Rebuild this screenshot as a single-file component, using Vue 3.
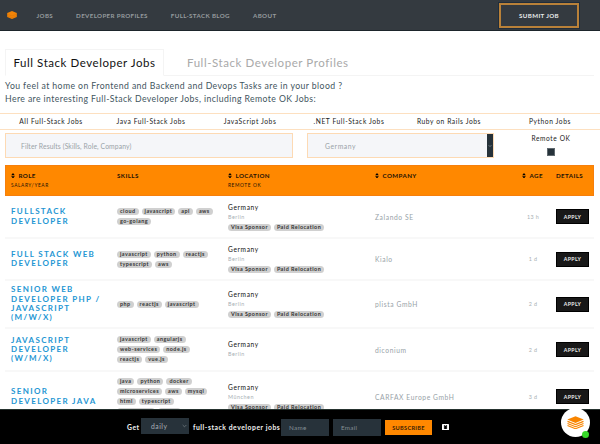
<script setup>
const nav = ['Jobs', 'Developer Profiles', 'Full-Stack Blog', 'About']
const categories = ['All Full-Stack Jobs', 'Java Full-Stack Jobs', 'JavaScript Jobs', '.NET Full-Stack Jobs', 'Ruby on Rails Jobs', 'Python Jobs']
const perks = ['Visa Sponsor', 'Paid Relocation']
const jobs = [
  { id: 1, size: 'first', role: ['Fullstack', 'Developer'], skills: [['cloud', 'javascript', 'api', 'aws'], ['go-golang']], city: 'Berlin', perks, company: 'Zalando SE', age: '13 h' },
  { id: 2, size: 'two', role: ['Full Stack Web', 'Developer'], skills: [['javascript', 'python', 'reactjs'], ['typescript', 'aws']], city: 'Berlin', perks, company: 'Kialo', age: '1 d' },
  { id: 3, size: 'four', role: ['Senior Web', 'Developer PHP /', 'JavaScript', '(m/w/x)'], skills: [['php', 'reactjs', 'javascript']], city: 'Berlin', perks, company: 'plista GmbH', age: '2 d' },
  { id: 4, size: 'three', role: ['JavaScript', 'Developer', '(w/m/x)'], skills: [['javascript', 'angularjs'], ['web-services', 'node.js'], ['reactjs', 'vue.js']], city: 'Berlin', perks: [], company: 'diconium', age: '2 d' },
  { id: 5, size: 'tall', role: ['Senior', 'Developer Java'], skills: [['java', 'python', 'docker'], ['microservices', 'aws', 'mysql'], ['html', 'typescript'], ['kubernetes', 'spring']], city: 'München', perks, company: 'CARFAX Europe GmbH', age: '3 d' },
]
</script>

<template>
  <div class="page">
    <header class="topbar">
      <svg class="brand" viewBox="0 0 10 8">
        <path d="M5 0 9.8 2v4L5 8 .2 6V2z" fill="#f28407" />
        <path d="M.4 3.2 5 5l4.600-1.800M.4 5 5 6.800 9.600 5" fill="none" stroke="#d56c04" stroke-width=".4" />
      </svg>
      <nav class="nav">
        <a v-for="n in nav" :key="n">{{ n }}</a>
      </nav>
      <a class="submit">Submit Job</a>
    </header>

    <div class="tabs">
      <div class="tab active"><span>Full Stack Developer Jobs</span></div>
      <div class="tab"><span>Full-Stack Developer Profiles</span></div>
    </div>

    <div class="intro">
      <p class="line-a">You feel at home on Frontend and Backend and Devops Tasks are in your blood ?</p>
      <p class="line-b">Here are interesting Full-Stack Developer Jobs, including Remote OK Jobs:</p>
    </div>

    <div class="categories">
      <a v-for="c in categories" :key="c">{{ c }}</a>
    </div>

    <div class="filters">
      <div class="search">Filter Results (Skills, Role, Company)</div>
      <div class="country">
        <span>Germany</span>
        <i><svg viewBox="0 0 6 6"><path d="M1.5 2 3 3.7 4.5 2" /></svg></i>
      </div>
      <div class="remote"><span>Remote OK</span><b></b></div>
    </div>

    <div class="grid thead">
      <div><p><svg class="sort" viewBox="0 0 4 6"><path d="M2 0 4 2.5H0zM2 6 0 3.5h4z" /></svg>Role</p><small>Salary/Year</small></div>
      <div><p>Skills</p></div>
      <div><p><svg class="sort" viewBox="0 0 4 6"><path d="M2 0 4 2.5H0zM2 6 0 3.5h4z" /></svg>Location</p><small>Remote OK</small></div>
      <div><p><svg class="sort" viewBox="0 0 4 6"><path d="M2 0 4 2.5H0zM2 6 0 3.5h4z" /></svg>Company</p></div>
      <div><p><svg class="sort" viewBox="0 0 4 6"><path d="M2 0 4 2.5H0zM2 6 0 3.5h4z" /></svg>Age</p></div>
      <div><p>Details</p></div>
    </div>

    <div v-for="j in jobs" :key="j.id" class="grid row" :class="j.size">
      <h3><span v-for="r in j.role" :key="r">{{ r }}</span></h3>
      <div class="skills">
        <div v-for="(line, i) in j.skills" :key="i" class="pills">
          <span v-for="s in line" :key="s" class="pill">{{ s }}</span>
        </div>
      </div>
      <div class="location">
        <span class="land">Germany</span>
        <span class="city">{{ j.city }}</span>
        <div v-if="j.perks.length" class="pills perks">
          <span v-for="p in j.perks" :key="p" class="pill">{{ p }}</span>
        </div>
      </div>
      <div class="company">{{ j.company }}</div>
      <div class="age">{{ j.age }}</div>
      <div class="details"><a class="apply">Apply</a></div>
    </div>

    <footer class="subscribe">
      <span class="get">Get</span>
      <div class="daily"><span>daily</span><svg viewBox="0 0 6 4"><path d="M.8.8 3 3 5.2.8" /></svg></div>
      <span class="what">full-stack developer jobs</span>
      <div class="field name">Name</div>
      <div class="field">Email</div>
      <a class="send">Subscribe</a>
      <svg class="close" viewBox="0 0 7 6"><rect width="7" height="6" rx=".6" fill="#fff" /><path d="M2.1 1.6 4.9 4.4M4.9 1.6 2.1 4.4" stroke="#000" stroke-width="1.4" /></svg>
    </footer>

    <div class="chat">
      <svg viewBox="0 0 17 13">
        <path d="M8.5.3 16.7 3.6 8.5 7 .3 3.6z" fill="#f98500" />
        <path d="M.5 5.4 8.5 8.6l8-3.2M.5 7.5l8 3.2 8-3.2M.5 9.5l8 3.2 8-3.2" fill="none" stroke="#f98500" stroke-width="1.2" />
      </svg>
      <i></i>
    </div>
  </div>
</template>

<style>
body { background: #fff; overflow: hidden; }
</style>

<style scoped>
* { box-sizing: border-box; }
p, h3 { margin: 0; font-weight: inherit; }
.page { position: relative; width: 600px; height: 444px; overflow: hidden; font-family: Lato, "Open Sans", sans-serif; white-space: nowrap; color: #222; }
.topbar { height: 31px; background: #343a40; border-bottom: 1px solid #1d252b; display: flex; align-items: center; padding: 0 21px 0 7px; }
.brand { width: 10px; height: 8px; }
.nav { display: flex; gap: 23px; margin-left: 19.5px; flex: 1; font-size: 6.2px; font-weight: 700; letter-spacing: .36px; text-transform: uppercase; color: #969b9e; }
.submit { width: 80px; height: 25px; border: 2px solid #b98139; outline: 1px solid #202d3b; display: flex; align-items: center; justify-content: center; color: #e8eaeb; font-size: 6.2px; font-weight: 700; letter-spacing: .36px; text-transform: uppercase; }

.tabs { display: flex; margin: 18px 6px 0 5px; height: 27px; border-bottom: 1px solid #f4f4f4; }
.tab { height: 27px; padding: 0 0 1px 23px; display: flex; align-items: center; font-size: 11.5px; letter-spacing: .57px; color: #a9a9a9; }
.tab.active { width: 159px; padding-left: 7.5px; border: 1px solid #f4f4f4; border-bottom-color: #fff; color: #111; letter-spacing: .55px; }

.intro { padding: 4px 0 0 5px; font-size: 8.7px; line-height: 12.5px; color: #3f5560; }
.line-a { letter-spacing: .41px; }
.line-b { letter-spacing: .4px; }

.categories { display: grid; grid-template-columns: 102px 98px 100px 98px 102px 100px; height: 17px; margin-top: 7.5px; border-top: 1px solid #fde0c0; border-bottom: 1px solid #fde0c0; text-align: center; line-height: 14px; font-size: 6.7px; letter-spacing: .57px; }
.filters { display: flex; height: 25px; margin: 3.5px 0 0 5px; }
.search, .country { flex-shrink: 0; border: 1px solid #fddab4; background: #f5f6f9; font-size: 6.8px; color: #9aa3a8; display: flex; align-items: center; }
.search { width: 288px; padding-left: 15px; letter-spacing: .1px; }
.country { width: 187px; margin-left: 14px; padding-left: 17px; justify-content: space-between; letter-spacing: .55px; }
.country i { width: 6px; height: 23px; background: #26323a; display: flex; align-items: center; }
.country svg { width: 6px; height: 6px; fill: none; stroke: #8c979d; stroke-width: .6; }
.remote { width: 114px; flex-shrink: 0; display: flex; flex-direction: column; align-items: center; font-size: 6.6px; letter-spacing: .6px; line-height: 9px; padding-top: 1px; }
.remote b { width: 8px; height: 8px; background: #26323a; margin-top: 5px; border: .5px solid #60696f; }

.grid { display: grid; grid-template-columns: 106px 111px 147px 147px 34px 38px; margin: 0 6px 0 5px; padding-left: 6px; }
.thead { height: 31px; margin-top: 7px; background: #ff8800; border: 1px solid #f67f0c; padding: 4.5px 0 0 5px; color: #1d1206; font-size: 6.2px; font-weight: 700; text-transform: uppercase; letter-spacing: .4px; }
.thead p { height: 10px; line-height: 10px; }
.thead small { display: block; font-size: 4.8px; font-weight: 400; line-height: 8px; letter-spacing: .6px; }
.sort { width: 4px; height: 5.5px; margin-right: 3.5px; vertical-align: -.5px; }

.row { height: 42px; align-items: center; border-bottom: 2px solid #f8f8f8; }
.row.first { height: 43px; }
.row.four { height: 48px; }
.row.three { height: 43px; }
.row.tall { height: 51px; }
h3 { display: flex; flex-direction: column; color: #2496d3; font-size: 8px; font-weight: 700; line-height: 9.3px; letter-spacing: 1.34px; text-transform: uppercase; }
.skills { display: flex; flex-direction: column; gap: 3px; }
.pills { display: flex; gap: 3px; height: 7px; }
.pill { background: #d0d0d0; border-radius: 4px; padding: 0 3px; height: 7px; line-height: 6.6px; font-size: 5.4px; font-weight: 700; letter-spacing: .48px; color: #333; }
.location { display: flex; flex-direction: column; }
.land { font-size: 6.6px; line-height: 9px; letter-spacing: .65px; color: #111; }
.city { font-size: 5.4px; line-height: 11px; letter-spacing: .5px; color: #a7afb4; }
.perks { margin-top: 1px; }
.company { font-size: 6.7px; letter-spacing: .6px; color: #98a2a8; }
.age { width: 20px; margin-left: 1px; text-align: center; font-size: 5.4px; letter-spacing: .4px; color: #a7afb4; }
.apply { display: flex; align-items: center; justify-content: center; width: 33px; height: 15px; background: #181818; border: 1px solid #000; color: #eee; font-size: 5.2px; font-weight: 700; letter-spacing: .35px; text-transform: uppercase; }

.subscribe { position: absolute; left: 0; right: 0; bottom: 0; height: 35px; background: #000; border-top: 1px solid #26332f; display: flex; align-items: center; padding: 0 0 0 127px; color: #f1f1f1; font-size: 6.8px; font-weight: 700; letter-spacing: .5px; }
.get { width: 14px; }
.daily { width: 48px; height: 16px; background: #27323a; display: flex; align-items: center; justify-content: space-between; padding: 0 2px 0 10px; font-weight: 400; color: #a9b0b5; margin-top: -2px; }
.daily svg { width: 5px; height: 4px; fill: none; stroke: #8a9499; stroke-width: .7; }
.what { width: 88px; margin-left: 4px; letter-spacing: .54px; }
.field { width: 48px; height: 17px; background: #27323a; color: #849096; font-weight: 400; font-size: 6.3px; letter-spacing: .3px; display: flex; align-items: center; padding-left: 8px; margin-right: 4px; }
.send { width: 47px; height: 15px; background: #ff8800; color: #3b2105; font-size: 5.6px; letter-spacing: .3px; text-transform: uppercase; display: flex; align-items: center; justify-content: center; }
.close { width: 7px; height: 6px; margin-left: 10px; margin-top: -1px; }
.chat { position: absolute; left: 561px; top: 408px; width: 29px; height: 29px; border-radius: 50%; background: #fff; display: flex; align-items: center; justify-content: center; }
.chat svg { width: 17px; height: 13px; }
.chat i { position: absolute; right: 1px; bottom: -1px; width: 7px; height: 7px; border-radius: 50%; background: #37d829; }
</style>
